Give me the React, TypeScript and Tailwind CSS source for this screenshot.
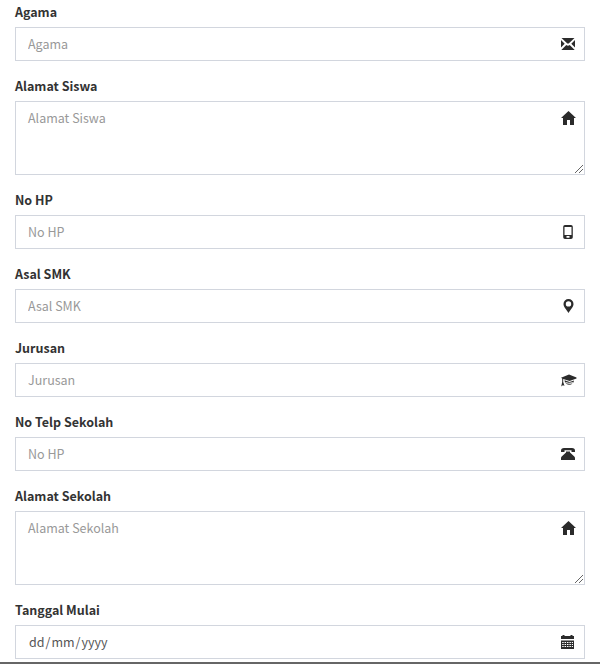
import React from "react";

type IconName = "envelope" | "home" | "phone" | "pin" | "cap" | "telephone" | "calendar";

const icons: Record<IconName, React.ReactNode> = {
  envelope: (
    <>
      <path d="M2.500 3h13L9.900 8.300a1.400 1.400 0 0 1-1.800 0z" />
      <path d="M2 5l3.700 3.700L2 12.600zM16 5l-3.700 3.700L16 12.600zM2.300 15l5-4.900q1.700 1.300 3.400 0l5 4.900z" />
    </>
  ),
  home: <path d="M9.500 2L17 9h-2v7h-4v-5H8v5H4V9H2z" />,
  phone: (
    <path
      fillRule="evenodd"
      d="M6 2h6q1.800 0 1.800 1.800v10.400q0 1.800-1.800 1.800H6q-1.800 0-1.800-1.800V3.800Q4.200 2 6 2zM5.500 4v8h7V4zM7.500 13v1.800h3V13z"
    />
  ),
  pin: (
    <path
      fillRule="evenodd"
      d="M9.500 2a5 5 0 0 1 5 5c0 2.800-2.400 4.800-5 9-2.600-4.200-5-6.200-5-9a5 5 0 0 1 5-5zm0 2.200a2.700 2.700 0 1 0 0 5.400 2.700 2.700 0 0 0 0-5.400z"
    />
  ),
  cap: (
    <>
      <path d="M10 3.600L17.500 6.600v.8L10.600 10 4.200 8V11l1.300 3.800-1.700-.6-1.600 1.200L3.200 11V7.600L2 6.700z" />
      <path d="M5.500 9.200l5.100 1.900 4.400-1.700-.5 2.200-1.400-.3q-2.500.9-5.300-.1L6 11.400z" />
      <path d="M6.500 12q3.500 1.300 7 .2-1 1.600-3.500 1.600-2.300 0-3.500-1.800z" />
    </>
  ),
  telephone: (
    <>
      <path d="M5 3h8q3 0 3 2.800V7h-3.500V5.300h-7V7H2V5.800Q2 3 5 3z" />
      <path d="M7 6.500h4v1l4.300 4q.7.600.7 1.500V15H2v-2q0-.9.7-1.500L7 7.500z" />
    </>
  ),
  calendar: (
    <>
      <path d="M2 3h1.500V2h2v1h6V2h2v1H15v3H2zM2 7.500h13V16H2z" />
      <path
        fill="none"
        stroke="#fff"
        strokeWidth="1"
        strokeDasharray="1.500 .9"
        d="M3.200 9.500h10.800M3.200 11.500h10.800M3.200 13.500h10.800"
      />
    </>
  ),
};

function Icon({ name }: { name: IconName }) {
  return (
    <svg viewBox="0 0 18 18" className="mt-[7px] mr-[7px] size-[18px] shrink-0 fill-[#2b2b2b]">
      {icons[name]}
    </svg>
  );
}

// Diagonal resize grip in the corner of a text area.
function Grip() {
  return (
    <svg viewBox="0 0 8 8" className="absolute right-px bottom-px size-2 fill-[#666]" shapeRendering="crispEdges">
      <path d="M0 7h1v1H0zM1 6h1v1H1zM2 5h1v1H2zM3 4h1v1H3zM4 3h1v1H4zM5 2h1v1H5zM6 1h1v1H6zM7 0h1v1H7z" />
      <path d="M4 7h1v1H4zM5 6h1v1H5zM6 5h1v1H6zM7 4h1v1H7z" />
    </svg>
  );
}

interface FieldProps {
  label: string;
  placeholder?: string;
  icon: IconName;
  kind?: "text" | "area" | "date";
}

const control =
  "min-w-0 flex-1 resize-none bg-transparent pl-3 text-[12.5px] leading-5 text-[#555] outline-none placeholder:text-[#999]";

function Field({ label, placeholder, icon, kind = "text" }: FieldProps) {
  return (
    <div className="mb-[15px]">
      <label className="mb-[5px] block h-5 text-[12.5px] leading-5 font-bold text-[#333]">{label}</label>
      <div className={`relative flex items-start border border-[#d2d6de] bg-white ${kind === "area" ? "h-[74px]" : "h-[34px]"}`}>
        {kind === "text" && <input className={`${control} h-8 pb-[2px]`} placeholder={placeholder} />}
        {kind === "area" && <textarea className={`${control} h-[72px] pt-[6px]`} placeholder={placeholder} />}
        {kind === "date" && (
          <div className="flex h-8 flex-1 items-center pl-[13px] text-[12.5px] leading-5 text-[#555]">
            <span>dd</span>
            <span className="px-px">/</span>
            <span>mm</span>
            <span className="px-px">/</span>
            <span>yyyy</span>
          </div>
        )}
        <Icon name={icon} />
        {kind === "area" && <Grip />}
      </div>
    </div>
  );
}

export default function App() {
  return (
    <div className="flex h-[664px] w-[600px] flex-col overflow-hidden bg-white font-['Noto_Sans_CJK_SC',sans-serif]">
      <form className="h-[662px] shrink-0 overflow-hidden px-[15px] pt-[2px]">
        <Field label="Agama" placeholder="Agama" icon="envelope" />
        <Field label="Alamat Siswa" placeholder="Alamat Siswa" icon="home" kind="area" />
        <Field label="No HP" placeholder="No HP" icon="phone" />
        <Field label="Asal SMK" placeholder="Asal SMK" icon="pin" />
        <Field label="Jurusan" placeholder="Jurusan" icon="cap" />
        <Field label="No Telp Sekolah" placeholder="No HP" icon="telephone" />
        <Field label="Alamat Sekolah" placeholder="Alamat Sekolah" icon="home" kind="area" />
        <Field label="Tanggal Mulai" icon="calendar" kind="date" />
      </form>
      <div className="h-[2px] shrink-0 bg-[#666]" />
    </div>
  );
}
